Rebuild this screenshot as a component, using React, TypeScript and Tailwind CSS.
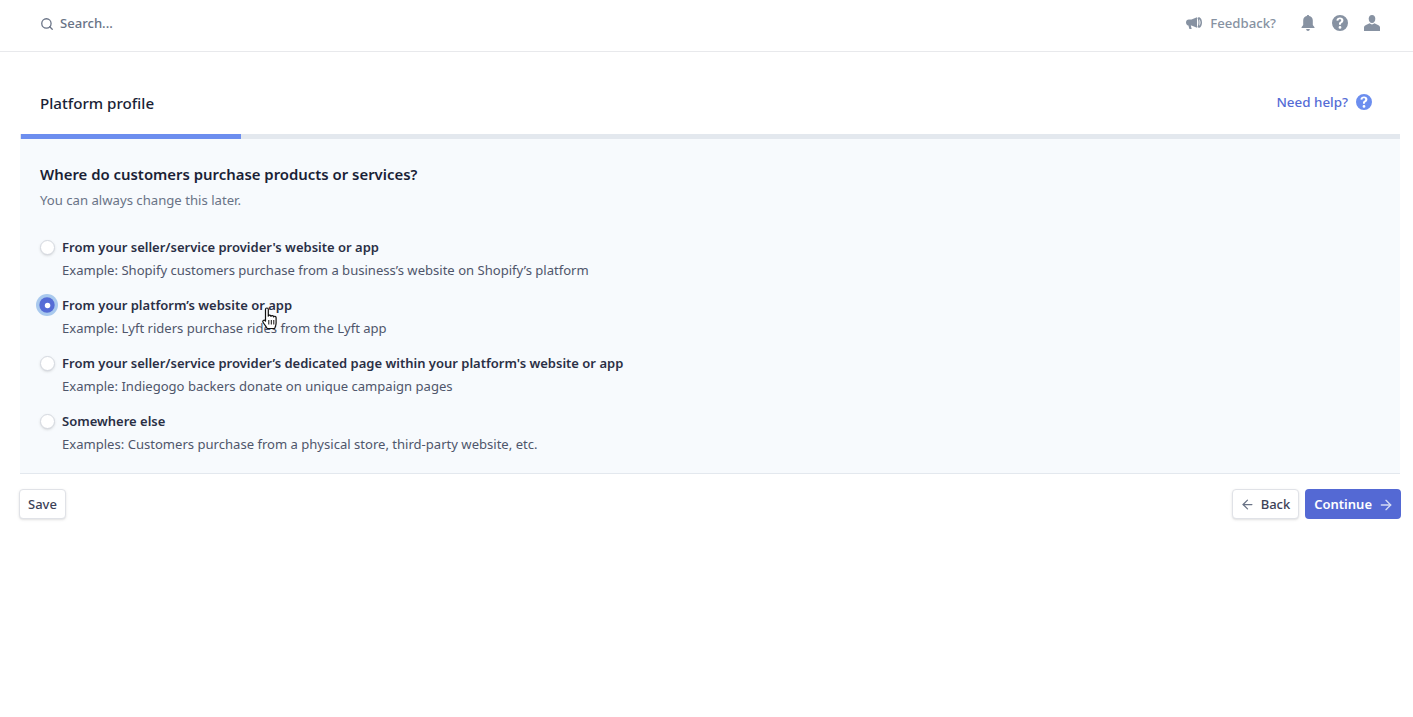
import React from "react";
import { ArrowLeft, ArrowRight, Search } from "lucide-react";

const options = [
  {
    title: "From your seller/service provider's website or app",
    hint: "Example: Shopify customers purchase from a business’s website on Shopify’s platform",
  },
  {
    title: "From your platform’s website or app",
    hint: "Example: Lyft riders purchase rides from the Lyft app",
    selected: true,
  },
  {
    title: "From your seller/service provider’s dedicated page within your platform's website or app",
    hint: "Example: Indiegogo backers donate on unique campaign pages",
  },
  {
    title: "Somewhere else",
    hint: "Examples: Customers purchase from a physical store, third-party website, etc.",
  },
];

const HelpIcon = ({ className }: { className: string }) => (
  <svg viewBox="0 0 16 16" className={className} fill="currentColor">
    <path
      fillRule="evenodd"
      d="M8 0a8 8 0 1 1 0 16A8 8 0 0 1 8 0zm0 11a1.4 1.4 0 1 0 0 2.800A1.400 1.400 0 0 0 8 11zM8 2.500c-2 0-3.400 1-3.600 2.900l2 .3c.1-.9.700-1.400 1.500-1.400.8 0 1.300.4 1.300 1.100 0 .6-.3.9-1 1.400-.9.600-1.300 1.200-1.200 2.600v.4h1.900v-.3c0-.7.200-1 1-1.500 1-.7 1.500-1.400 1.500-2.700 0-1.800-1.400-2.800-3.400-2.800z"
    />
  </svg>
);

const BellIcon = () => (
  <svg viewBox="0 0 16 16" className="w-4 h-4" fill="currentColor">
    <path d="M8 0c.7 0 1.200.5 1.200 1.100C11.400 1.600 12.800 3.300 12.800 5.500V10l1.700 2.300c.2.300 0 .7-.4.700H1.900c-.4 0-.6-.4-.4-.7L3.200 10V5.500c0-2.200 1.400-3.900 3.600-4.400C6.800.5 7.300 0 8 0z" />
    <path d="M6.200 14h3.600c0 1.100-.8 2-1.800 2s-1.800-.9-1.800-2z" />
  </svg>
);

const UserIcon = () => (
  <svg viewBox="0 0 16 16" className="w-4 h-4" fill="currentColor">
    <path d="M8 0c2 0 3.300 1.500 3.300 3.700C11.300 6 10 8 8 8S4.700 6 4.700 3.700C4.700 1.500 6 0 8 0z" />
    <path d="M5.600 8.300C6.300 9 7.100 9.400 8 9.400s1.700-.4 2.400-1.100l3.600 1.600c1.200.5 2 1.300 2 2.500V16H0v-3.600c0-1.200.8-2 2-2.500z" />
  </svg>
);

const MegaphoneIcon = () => (
  <svg viewBox="0 0 16 14" className="w-4 h-[14px]" fill="currentColor">
    <path d="M11 1.200v10.600L5.500 9.400H4.800l.9 3.600H3.400L2.400 9.400C1 9.300 0 8.100 0 6.500s1.200-2.900 2.800-2.900h2.700z" />
    <path
      fillRule="evenodd"
      d="M12.800 1.200C14.600 1.200 16 3.600 16 6.500s-1.400 5.300-3.200 5.300c-.6 0-1-.3-1.400-.7.600-1 1-2.800 1-4.600s-.4-3.600-1-4.600c.4-.4.800-.7 1.400-.7zm.3 2.100c.8.500 1.400 1.800 1.400 3.200s-.6 2.700-1.400 3.200c.3-1 .4-2 .4-3.200s-.1-2.200-.4-3.200z"
    />
  </svg>
);

const HandCursor = () => (
  <svg viewBox="0 0 18 24" className="absolute left-[261px] top-[307px] w-[18px] h-[24px]">
    <path
      d="M4.500 2.200c0-1.600 2.800-1.600 2.800 0v7c.3-1.400 2.600-1.300 2.700.2.400-1.200 2.500-1 2.600.5.500-1 2.400-.8 2.500.7v5.400c0 2.500-.8 3.800-1.500 5.500H6.200c-1-1.700-2.500-3.600-4.200-6.300-.9-1.500 1-2.800 2.500-1.200z"
      fill="#ffffff"
      stroke="#111111"
      strokeWidth="1.200"
      strokeLinejoin="round"
    />
    <path d="M7.800 13v4.500M10.300 13v4.500M12.800 13v4.500" stroke="#111111" strokeWidth="1" fill="none" />
  </svg>
);

const App = () => {
  return (
    <div className="relative min-h-[717px] bg-white font-['Noto_Sans','Open_Sans',sans-serif] text-[14px] text-[#3c4257]">
      {/* top bar */}
      <div className="flex items-center h-[52px] pb-[4px] pl-[40px] pr-[33px] border-b border-[#e8e9ec]">
        <Search className="w-[14px] h-[14px] text-[#697386]" strokeWidth={2.2} />
        <span className="ml-[6px] text-[13.1px] font-medium text-[#697386]">Search...</span>
        <div className="ml-auto flex items-center text-[#8792a2]">
          <MegaphoneIcon />
          <span className="ml-[8px] text-[13.2px] font-medium">Feedback?</span>
          <div className="ml-[24px] flex items-center gap-[16px]">
            <BellIcon />
            <HelpIcon className="w-4 h-4" />
            <UserIcon />
          </div>
        </div>
      </div>

      {/* heading */}
      <div className="flex items-center h-[82px] pt-[20px] pl-[40px] pr-[41px]">
        <h1 className="text-[15.15px] font-medium text-[#1a1f36]">Platform profile</h1>
        <div className="ml-auto flex items-center text-[#6c8eef] -translate-y-px">
          <span className="text-[13.4px] font-medium text-[#556cd6]">Need help?</span>
          <HelpIcon className="ml-[8px] w-4 h-4" />
        </div>
      </div>

      {/* form panel */}
      <div className="ml-[20px] mr-[13px] border-b border-[#e3e8ee] bg-[#f7fafd]">
        <div className="h-[5px] bg-[#e3e8ee]">
          <div className="w-[220px] h-full ml-px bg-[#6c8eef]" />
        </div>
        <div className="pl-[20px] pt-[24px] pb-[19px]">
          <h2 className="text-[14.9px] leading-[22px] font-semibold text-[#1a1f36]">
            Where do customers purchase products or services?
          </h2>
          <p className="mt-[5px] text-[13.15px] leading-[20px] text-[#697386]">You can always change this later.</p>
          <div className="mt-[27px] flex flex-col gap-[15px]">
            {options.map((option) => (
              <div key={option.title} className="flex">
                {option.selected ? (
                  <div className="mt-[3px] w-[14px] h-[14px] rounded-full bg-[#556cd6] ring-[3px] ring-[#a9c9ee] flex items-center justify-center shrink-0 scale-110">
                    <div className="w-[5px] h-[5px] rounded-full bg-white" />
                  </div>
                ) : (
                  <div className="mt-[3px] w-[15px] h-[15px] rounded-full bg-white border border-[#d5d9e0] shadow-sm shrink-0" />
                )}
                <div className={option.selected ? "ml-[8px]" : "ml-[7px]"}>
                  <div className="text-[13px] leading-[20px] font-semibold text-[#2a2f45]">{option.title}</div>
                  <div className="mt-[3px] text-[13.07px] leading-[20px] text-[#4f566b]">{option.hint}</div>
                </div>
              </div>
            ))}
          </div>
        </div>
      </div>

      {/* footer buttons */}
      <div className="flex items-center mt-[15px] pl-[19px] pr-[12px]">
        <button className="h-[30px] pt-px px-[8px] rounded-[4px] bg-white border border-[#e0e2e7] shadow-sm text-[13px] font-medium text-[#3c4257]">
          Save
        </button>
        <div className="ml-auto flex items-center gap-[6px]">
          <button className="flex items-center h-[30px] pt-px pl-[7px] pr-[8px] rounded-[4px] bg-white border border-[#e0e2e7] shadow-sm text-[13px] font-medium text-[#3c4257]">
            <ArrowLeft className="w-[15px] h-[15px] text-[#697386]" />
            <span className="ml-[6px]">Back</span>
          </button>
          <button className="flex items-center h-[30px] pt-px pl-[9px] pr-[7px] rounded-[4px] bg-[#5469d4] text-[13px] font-semibold text-white">
            Continue
            <ArrowRight className="ml-[6px] w-[16px] h-[16px] text-[#d5dcf5]" />
          </button>
        </div>
      </div>

      <HandCursor />
    </div>
  );
};

export default App;
